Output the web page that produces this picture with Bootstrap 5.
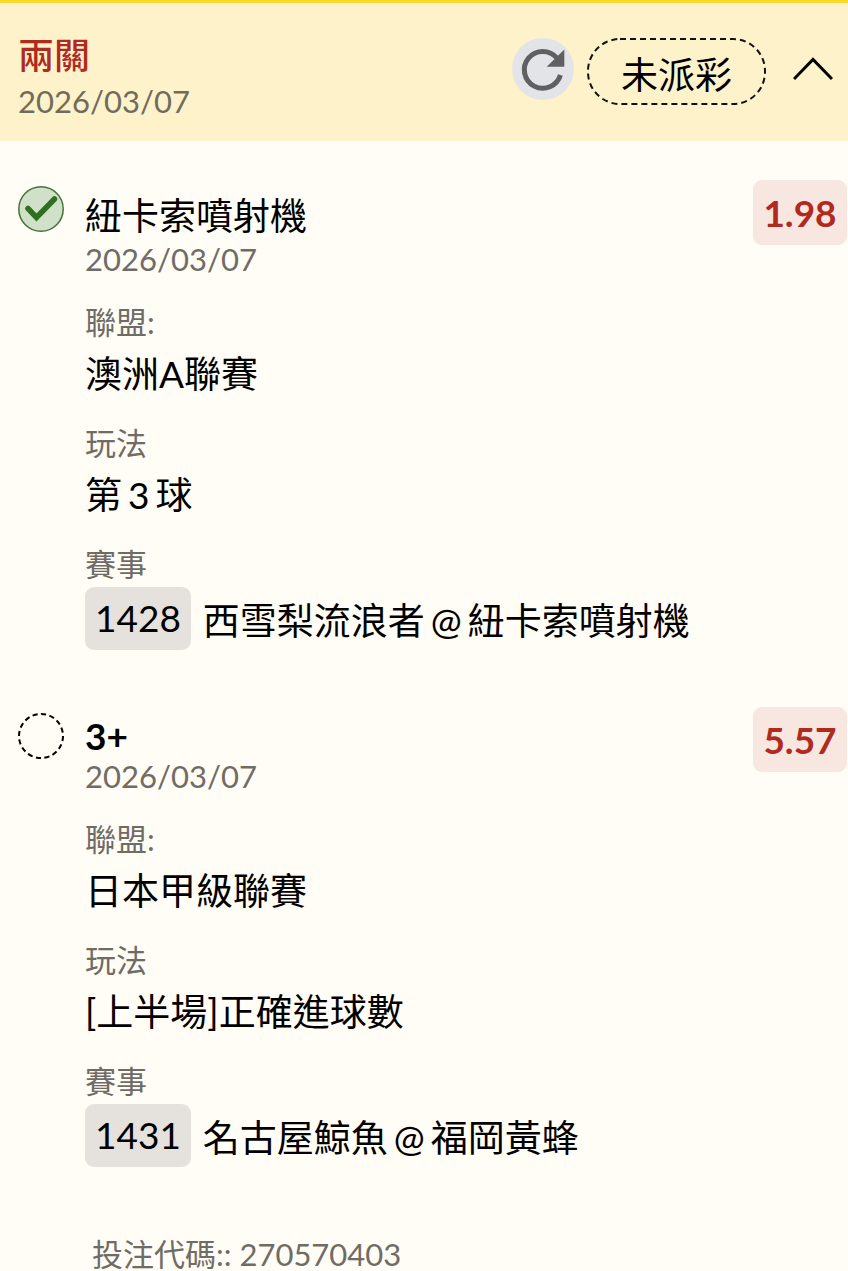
<!DOCTYPE html>
<html lang="zh-Hant">
<head>
<meta charset="utf-8">
<meta name="viewport" content="width=device-width, initial-scale=1">
<title>投注紀錄</title>
<link href="https://cdn.jsdelivr.net/npm/bootstrap@5.3.0/dist/css/bootstrap.min.css" rel="stylesheet">
<style>
  body { background: #fffdf5; color: #000; font-family: Lato, "Noto Sans CJK TC", sans-serif; font-size: 37px; line-height: normal; }
  body::-webkit-scrollbar { display: none; }
  h1, h2, dl, dt, dd { margin: 0; font-size: 37px; line-height: normal; font-weight: 400; }
  .slip-head { background: #fef2cb; border-top: 3px solid #fcd930; padding: 25px 15px 22px 18px; }
  .slip-title { color: #b02a1f; font-weight: 500; font-size: 36px; line-height: 55px; }
  .slip-date, .field-label { font-size: 31px; color: #6f6c66; display: block; line-height: 36px; }
  .slip-head .slip-date { color: #716b59; }
  .head-tools { padding-top: 10px; }
  .tool-btn { background: none; border: 0; padding: 0; color: #000; display: block; }
  .state-pill { position: relative; padding: 8px 34px 5px; margin-left: 13px; margin-right: 27px; }
  .state-pill svg { position: absolute; inset: 0; width: 100%; height: 100%; }
  .chevron { padding-top: 19px; }
  .leg-list { padding: 39px 1px 0 18px; }
  .leg { margin-bottom: 57px; }
  .leg-mark { width: 67px; padding-top: 6px; }
  .leg-mark svg { display: block; }
  .leg-body { padding-top: 7px; }
  .leg-name.strong { font-weight: 700; line-height: 44px; }
  .field-label { margin: 23px 0 1px; line-height: 43px; }
  .leg-body .slip-date { margin-bottom: 24px; }
  .field-label:first-child { margin-top: 0; }
  .odds { background: #f8e7e1; color: #b02a1f; font-weight: 700; border-radius: 9px; min-width: 94px; padding: 10px; }
  .match-no { background: #e5e2dd; border-radius: 9px; padding: 8px 10px 10px; }
  .match-row { gap: 12px; }
  .spaced { gap: 6px; }
  .slip-code { padding: 12px 0 0 92px; font-size: 31px; line-height: 36px; color: #6f6c66; }
</style>
</head>
<body>
<header class="slip-head d-flex justify-content-between align-items-start">
  <div>
    <h1 class="slip-title">兩關</h1>
    <time class="slip-date" datetime="2026-03-07">2026/03/07</time>
  </div>
  <div class="head-tools d-flex align-items-start">
    <button type="button" class="tool-btn" aria-label="重新整理">
      <svg class="d-block" width="62" height="62" viewBox="0 0 62 62">
        <circle cx="31" cy="31" r="31" fill="#e2e4e8"/>
        <path d="M48.400 37A18.400 18.400 0 1 1 45 20.200" fill="none" stroke="#606060" stroke-width="5"/>
        <path d="M52.300 11.500v17.200H34.700z" fill="#606060"/>
      </svg>
    </button>
    <button type="button" class="tool-btn state-pill">
      <svg aria-hidden="true"><rect x="1" y="1" rx="32" style="width:calc(100% - 2px);height:calc(100% - 2px)" fill="none" stroke="#111" stroke-width="2" stroke-dasharray="6 4"/></svg>
      未派彩
    </button>
    <button type="button" class="tool-btn chevron" aria-label="收合">
      <svg class="d-block" width="40" height="24" viewBox="0 0 40 24"><path d="M1 22L20 2.500L39 22" fill="none" stroke="#000" stroke-width="3"/></svg>
    </button>
  </div>
</header>

<main class="leg-list">
  <article class="leg d-flex align-items-start">
    <div class="leg-mark flex-shrink-0">
      <svg width="46" height="46" viewBox="0 0 46 46" role="img" aria-label="過關">
        <circle cx="23" cy="23" r="22.200" fill="#d1e1c9" stroke="#40743a" stroke-width="1.500"/>
        <path d="M10 22.500L18.500 31.500L36.500 13" fill="none" stroke="#2f6f1f" stroke-width="5.500" stroke-linecap="round"/>
      </svg>
    </div>
    <div class="leg-body flex-grow-1">
      <h2 class="leg-name">紐卡索噴射機</h2>
      <time class="slip-date" datetime="2026-03-07">2026/03/07</time>
      <dl>
        <dt class="field-label">聯盟:</dt><dd>澳洲A聯賽</dd>
        <dt class="field-label">玩法</dt>
        <dd class="spaced d-flex align-items-baseline"><span>第</span> <span>3</span> <span>球</span></dd>
        <dt class="field-label">賽事</dt>
        <dd class="match-row d-flex align-items-center"><span class="match-no">1428</span>
          <span class="spaced d-flex align-items-baseline"><span>西雪梨流浪者</span> <span>@</span> <span>紐卡索噴射機</span></span></dd>
      </dl>
    </div>
    <div class="odds text-center flex-shrink-0">1.98</div>
  </article>

  <article class="leg d-flex align-items-start">
    <div class="leg-mark flex-shrink-0">
      <svg width="46" height="46" viewBox="0 0 46 46" role="img" aria-label="未開賽">
        <circle cx="23" cy="23" r="22" fill="none" stroke="#000" stroke-width="2" pathLength="160" stroke-dasharray="6 4"/>
      </svg>
    </div>
    <div class="leg-body flex-grow-1">
      <h2 class="leg-name strong">3+</h2>
      <time class="slip-date" datetime="2026-03-07">2026/03/07</time>
      <dl>
        <dt class="field-label">聯盟:</dt><dd>日本甲級聯賽</dd>
        <dt class="field-label">玩法</dt><dd>[上半場]正確進球數</dd>
        <dt class="field-label">賽事</dt>
        <dd class="match-row d-flex align-items-center"><span class="match-no">1431</span>
          <span class="spaced d-flex align-items-baseline"><span>名古屋鯨魚</span> <span>@</span> <span>福岡黃蜂</span></span></dd>
      </dl>
    </div>
    <div class="odds text-center flex-shrink-0">5.57</div>
  </article>
</main>

<footer class="slip-code">投注代碼:: 270570403</footer>
<script src="https://cdn.jsdelivr.net/npm/bootstrap@5.3.0/dist/js/bootstrap.bundle.min.js"></script>
</body>
</html>
